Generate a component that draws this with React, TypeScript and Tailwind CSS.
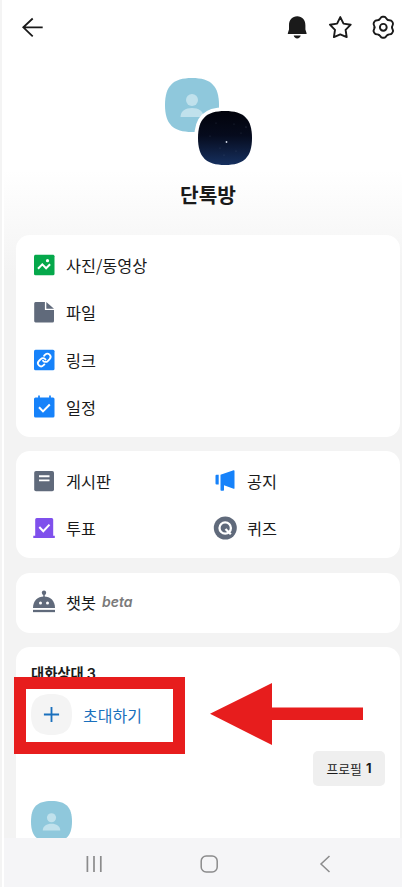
import type { ReactNode } from "react";

const SQUIRCLE =
  "M27 0C46 0 54 8 54 27C54 46 46 54 27 54C8 54 0 46 0 27C0 8 8 0 27 0Z";

const GEAR_LOBES = [0, 60, 120, 180, 240, 300];

function PersonAvatar({ size }: { size: number }) {
  return (
    <svg width={size} height={size} viewBox="0 0 54 54" className="block">
      <path d={SQUIRCLE} fill="#8fc8dc" />
      <circle cx="27" cy="22" r="6" fill="#c0e1ec" />
      <path d="M15.500 39c0-6 5-9 11.500-9s11.500 3 11.500 9z" fill="#c0e1ec" />
    </svg>
  );
}

function NightAvatar() {
  return (
    <svg width="62" height="62" viewBox="-4 -4 62 62" className="block">
      <defs>
        <linearGradient id="night" x1="0" y1="0" x2="0" y2="1">
          <stop offset="0" stopColor="#02030b" />
          <stop offset="0.45" stopColor="#060b1d" />
          <stop offset="1" stopColor="#16305f" />
        </linearGradient>
      </defs>
      <path d={SQUIRCLE} fill="#fff" stroke="#fff" strokeWidth="7.500" />
      <path d={SQUIRCLE} fill="url(#night)" />
      <g fill="#7d8aa8">
        <circle cx="28.500" cy="31" r="0.900" fill="#d5dcea" />
        <circle cx="18" cy="12" r="0.350" />
        <circle cx="36" cy="13" r="0.350" />
        <circle cx="43" cy="22" r="0.350" />
        <circle cx="48" cy="16" r="0.400" />
        <circle cx="12" cy="25" r="0.350" />
        <circle cx="22" cy="37" r="0.350" />
        <circle cx="38" cy="40" r="0.350" />
        <circle cx="26" cy="44" r="0.350" />
      </g>
    </svg>
  );
}

function Icon({ children }: { children: ReactNode }) {
  return (
    <svg width="24" height="24" viewBox="0 0 24 24" fill="none" className="block shrink-0">
      {children}
    </svg>
  );
}

const PhotoIcon = (
  <Icon>
    <rect x="2" y="1.800" width="20.500" height="20.500" rx="1.500" fill="#05a84b" />
    <path d="M6 15.800l4.300-4.400 3.800 3.900 4-4" stroke="#fff" strokeWidth="2" />
    <circle cx="15.500" cy="7.700" r="1.600" fill="#fff" />
  </Icon>
);

const FileIcon = (
  <Icon>
    <path
      d="M3.500 2h9.400v8h9.100v11a1.500 1.500 0 0 1-1.500 1.500h-17A1.500 1.500 0 0 1 2.200 21V3.500A1.500 1.500 0 0 1 3.500 2z"
      fill="#606a7b"
    />
    <path d="M14.300 2l7.700 6.800h-7.700z" fill="#606a7b" />
  </Icon>
);

const LinkIcon = (
  <Icon>
    <rect x="2" y="1.800" width="20.500" height="20.500" rx="1.500" fill="#1682fa" />
    <g
      transform="translate(4.700 4.500) scale(0.630)"
      stroke="#fff"
      strokeWidth="2.900"
      strokeLinecap="round"
      strokeLinejoin="round"
    >
      <path d="M10 13a5 5 0 0 0 7.540.540l3-3a5 5 0 0 0-7.070-7.070l-1.720 1.710" />
      <path d="M14 11a5 5 0 0 0-7.540-.540l-3 3a5 5 0 0 0 7.070 7.070l1.710-1.710" />
    </g>
  </Icon>
);

const CalendarIcon = (
  <Icon>
    <rect x="2" y="2.500" width="20.500" height="20" rx="1.500" fill="#1682fa" />
    <path d="M7 0.500v4M18 0.500v4" stroke="#1682fa" strokeWidth="1.700" />
    <path d="M7 12.200l4 4.200 6.800-6.900" stroke="#fff" strokeWidth="2" />
  </Icon>
);

const BoardIcon = (
  <Icon>
    <rect x="2.200" y="2" width="19.800" height="20.300" rx="1.800" fill="#606a7b" />
    <path d="M7 7.200h10.500M7 11.400h10.500" stroke="#fff" strokeWidth="1.900" />
  </Icon>
);

const VoteIcon = (
  <Icon>
    <path
      d="M4.700 2h15a1.500 1.500 0 0 1 1.500 1.500v16.200h1.600v2.300H1.300v-2.300h1.900V3.500A1.500 1.500 0 0 1 4.700 2z"
      fill="#7f50ec"
    />
    <path d="M7.300 11l4 4.200 6.200-6.600" stroke="#fff" strokeWidth="2" />
  </Icon>
);

const NoticeIcon = (
  <Icon>
    <path d="M3.500 5.700h2.200v9.800H3.500a1 1 0 0 1-1-1V6.700a1 1 0 0 1 1-1z" fill="#1682fa" />
    <path
      d="M7.500 5.700L20.600 1.300a.7.700 0 0 1 .9.600v17.300a.7.700 0 0 1-.9.600L11 16.300V21a.8.800 0 0 1-.8.800H8.300a.8.800 0 0 1-.8-.8z"
      fill="#1682fa"
    />
  </Icon>
);

const QuizIcon = (
  <Icon>
    <circle cx="12.300" cy="12" r="11.500" fill="#606a7b" />
    <circle cx="12.200" cy="12" r="5.700" stroke="#fff" strokeWidth="2.300" />
    <path d="M12.500 13l5.300 5.200" stroke="#fff" strokeWidth="2.300" />
  </Icon>
);

const BotIcon = (
  <Icon>
    <circle cx="12" cy="2.700" r="2.200" fill="#606a7b" />
    <path d="M12 4v4" stroke="#606a7b" strokeWidth="1.500" />
    <path d="M1 18C1 10.700 5.500 6.400 12 6.400S23 10.700 23 18z" fill="#606a7b" />
    <circle cx="8.500" cy="13" r="1.500" fill="#fff" />
    <circle cx="15.500" cy="13" r="1.500" fill="#fff" />
    <path d="M1 21h22" stroke="#606a7b" strokeWidth="2.300" />
  </Icon>
);

function MenuRow({ icon, label, children }: { icon: ReactNode; label: string; children?: ReactNode }) {
  return (
    <div className="flex h-[47.3px] flex-1 items-center pl-[16px]">
      {icon}
      <span className="ml-[10px] text-[16.3px] leading-6 text-[#1a1a1a]">{label}</span>
      {children}
    </div>
  );
}

function Header() {
  return (
    <header className="flex h-[54px] shrink-0 items-center pr-[7px] pl-[16px]">
      <button aria-label="뒤로" className="mr-auto">
        <svg width="24" height="24" viewBox="0 0 24 24" fill="none" stroke="#1a1a1a" strokeWidth="1.800" className="block">
          <path d="M22.700 12.300H3M12.700 3.500L3.300 12.300l9.400 9" />
        </svg>
      </button>
      <button aria-label="알림" className="mr-[19px]">
        <svg width="24" height="26" viewBox="0 0 24 26" fill="#1a1a1a" className="block">
          <path d="M4 11.200C4 5.800 7.300 2.300 12.200 2.300s8.200 3.500 8.200 8.900v4.300l1.200 3.700c.1.500-.2.900-.7.900H3.500c-.5 0-.8-.4-.7-.9L4 15.500z" />
          <path d="M8.700 21.600h7c-.4 1.700-1.700 2.900-3.500 2.900s-3.100-1.200-3.500-2.900z" />
        </svg>
      </button>
      <button aria-label="즐겨찾기" className="mr-[19px]">
        <svg width="24" height="24" viewBox="0 0 24 24" fill="none" stroke="#1a1a1a" strokeWidth="1.900" strokeLinejoin="round" className="block">
          <path d="M12.300 2.100l3.200 6.500 7.200 1.100-5.100 5.100 1.100 7.300-6.400-2.700-6.400 2.700 1.100-7.300-5.100-5.100 7.200-1.100z" />
        </svg>
      </button>
      <button aria-label="설정">
        <svg width="24" height="24" viewBox="-12.300 -12.300 24 24" fill="none" stroke="#1a1a1a" strokeWidth="1.900" strokeLinecap="round" className="block">
          {GEAR_LOBES.map((angle) => (
            <path
              key={angle}
              transform={`rotate(${angle})`}
              d="M-4.400-7.620C-3.100-7.700-2.900-10.500-.8-10.500H.8C2.900-10.500 3.100-7.700 4.400-7.620"
            />
          ))}
          <circle r="3.400" />
        </svg>
      </button>
    </header>
  );
}

function NavBar() {
  return (
    <nav className="flex h-[49px] shrink-0 items-center bg-[#f5f5f7] pt-[3px]">
      <svg width="18" height="18" viewBox="0 0 18 18" stroke="#8b8b8c" strokeWidth="1.700" className="ml-[81px]">
        <path d="M2.400 1v16M9 1v16M15.800 1v16" />
      </svg>
      <svg width="18" height="18" viewBox="0 0 18 18" fill="none" stroke="#8b8b8c" strokeWidth="1.500" className="ml-[97px]">
        <rect x="1.200" y="1" width="16" height="16" rx="5" />
      </svg>
      <svg width="12" height="18" viewBox="0 0 12 18" fill="none" stroke="#8b8b8c" strokeWidth="1.500" className="ml-[101px]">
        <path d="M10.500 1L2 9l8.500 8" />
      </svg>
    </nav>
  );
}

export default function App() {
  return (
    <div className="relative flex h-[887px] w-[402px] overflow-hidden bg-[#f4f4f4] pl-[2px] font-['Noto_Sans_CJK_KR','Noto_Sans',sans-serif]">
      <div className="flex flex-1 flex-col border-l-2 border-white bg-[linear-gradient(#fff_170px,#f3f3f3_275px)]">
        <Header />

        <div className="mt-[24px] flex h-[87px] justify-center pl-[11px]">
          <div className="relative h-[87px] w-[87px]">
            <PersonAvatar size={54} />
            <div className="absolute top-[29px] left-[29px]">
              <NightAvatar />
            </div>
          </div>
        </div>
        <h1 className="mt-[15px] pl-[10px] text-center text-[20.3px] leading-[28px] font-bold text-[#1a1a1a]">
          단톡방
        </h1>

        <main className="mt-[27px] mr-[2px] ml-[12px] flex flex-1 flex-col">
          <section className="h-[202px] shrink-0 rounded-[14px] bg-white pt-[6.5px]">
            <MenuRow icon={PhotoIcon} label="사진/동영상" />
            <MenuRow icon={FileIcon} label="파일" />
            <MenuRow icon={LinkIcon} label="링크" />
            <MenuRow icon={CalendarIcon} label="일정" />
          </section>

          <section className="mt-[14px] grid h-[107px] shrink-0 grid-cols-[181px_1fr] content-start rounded-[14px] bg-white pt-[6.5px]">
            <MenuRow icon={BoardIcon} label="게시판" />
            <MenuRow icon={NoticeIcon} label="공지" />
            <MenuRow icon={VoteIcon} label="투표" />
            <MenuRow icon={QuizIcon} label="퀴즈" />
          </section>

          <section className="mt-[15px] h-[60px] shrink-0 rounded-[14px] bg-white pt-[5.5px]">
            <MenuRow icon={BotIcon} label="챗봇">
              <span className="mb-[1px] ml-[6px] font-['Inter',sans-serif] text-[14px] leading-5 font-semibold text-[#7a7a7a] italic">
                beta
              </span>
            </MenuRow>
          </section>

          <section className="mt-[14px] flex h-[191px] shrink-0 flex-col overflow-hidden rounded-t-[14px] bg-white px-[15px]">
            <h2 className="mt-[16px] h-[20px] shrink-0 text-[14.3px] leading-[20px] font-bold text-[#1a1a1a]">
              대화상대 <span className="font-['Inter',sans-serif] font-semibold">3</span>
            </h2>
            <button className="mt-[11px] flex h-[41px] shrink-0 items-center">
              <svg width="41" height="41" viewBox="0 0 54 54" className="block">
                <path d={SQUIRCLE} fill="#f4f4f4" />
                <path d="M27 17v20M17 27h20" stroke="#1a70bd" strokeWidth="2.400" />
              </svg>
              <span className="ml-[11px] text-[16px] leading-6 text-[#1a70bd]">초대하기</span>
            </button>
            <div className="mt-[16px] flex h-[35px] w-[72px] shrink-0 items-center justify-center gap-[4px] self-end rounded-[5px] bg-[#efefef] text-[12.8px] text-[#1a1a1a]">
              프로필 <b className="font-['Inter',sans-serif]">1</b>
            </div>
            <div className="mt-[15px]">
              <PersonAvatar size={41} />
            </div>
          </section>
        </main>

        <NavBar />
      </div>

      {/* callout over the invite button */}
      <div className="absolute top-[677px] left-[14px] h-[77px] w-[170.5px] border-[12px] border-[#e71d1d]" />
      <svg width="153" height="62" viewBox="0 0 153 62" className="absolute top-[683px] left-[210px]">
        <path d="M0 30.700L62 0v24.500h91v12.500H62v25z" fill="#e71d1d" />
      </svg>
    </div>
  );
}
